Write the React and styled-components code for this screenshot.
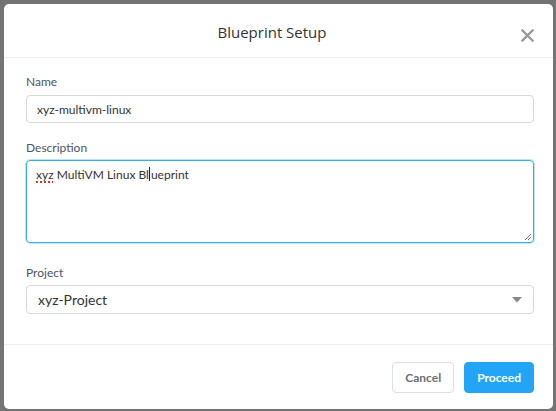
import React from "react";
import styled, { createGlobalStyle } from "styled-components";

const GlobalStyle = createGlobalStyle`
  html, body {
    margin: 0;
    padding: 0;
    background: #747474;
  }
  body {
    font-family: Lato, "Liberation Sans", sans-serif;
  }
`;

const Backdrop = styled.div`
  width: 556px;
  height: 411px;
  box-sizing: border-box;
  padding: 4px 3px 2px 4px;
`;

const Modal = styled.div`
  width: 549px;
  height: 405px;
  background: #fff;
  border-radius: 5px;
  display: flex;
  flex-direction: column;
`;

const Header = styled.div`
  height: 53px;
  border-bottom: 1px solid #eeeeee;
  display: flex;
  align-items: center;
  justify-content: center;
  padding-right: 13px;
  position: relative;
`;

const Title = styled.h2`
  margin: 2px 0 0 0;
  font-family: "Open Sans", Lato, sans-serif;
  font-size: 15px;
  font-weight: 400;
  color: #333;
`;

const Close = styled.button`
  position: absolute;
  right: 18px;
  top: 23px;
  width: 16px;
  height: 16px;
  padding: 0;
  border: none;
  background: none;
  display: flex;
  align-items: center;
  justify-content: center;
`;

const Body = styled.div`
  flex: 1;
  padding: 16px 19px 0 22px;
`;

const Field = styled.div`
  margin-bottom: ${(p) => p.$gap}px;
`;

const Label = styled.div`
  font-size: 12px;
  line-height: 16px;
  color: #4b5563;
  margin-bottom: ${(p) => p.$gap || 5}px;
`;

const Input = styled.div`
  height: 28px;
  box-sizing: border-box;
  border: 1px solid #d6d9dc;
  border-radius: 4px;
  padding: 0 10px;
  display: flex;
  align-items: center;
  font-size: 12px;
  color: #333;
`;

const TextArea = styled.div`
  position: relative;
  height: 83px;
  box-sizing: border-box;
  border: 1px solid #3aaee6;
  box-shadow: 0 0 0 1px #bfe4f7;
  border-radius: 4px;
  padding: 6px 9px;
  font-size: 12px;
  line-height: 16px;
  color: #333;
`;

const Misspelled = styled.span`
  text-decoration: underline dotted #e0302a;
  text-decoration-thickness: 2px;
  text-underline-offset: 2px;
`;

const Caret = styled.span`
  display: inline-block;
  width: 1px;
  height: 14px;
  background: #222;
  vertical-align: -2px;
  margin: 0 0.5px;
`;

const Grip = styled.svg`
  position: absolute;
  right: 1px;
  bottom: 1px;
`;

const Select = styled.div`
  height: 29px;
  margin-top: -1px;
  box-sizing: border-box;
  border: 1px solid #d6d9dc;
  border-radius: 4px;
  padding: 0 11px;
  display: flex;
  align-items: center;
  justify-content: space-between;
  font-size: 14px;
  color: #333;
`;

const Footer = styled.div`
  height: 64px;
  border-top: 1px solid #eeeeee;
  display: flex;
  align-items: center;
  justify-content: flex-end;
  gap: 10px;
  padding: 0 19px 0 0;
`;

const Button = styled.button`
  height: 31px;
  box-sizing: border-box;
  padding: 0 12px;
  border-radius: 4px;
  font-family: inherit;
  font-size: 12px;
  font-weight: 700;
  border: 1px solid ${(p) => (p.$primary ? "#22a5f7" : "#dcdfe3")};
  background: ${(p) => (p.$primary ? "#22a5f7" : "#fff")};
  color: ${(p) => (p.$primary ? "#fff" : "#6b6f73")};
`;

export default function App() {
  return (
    <>
      <GlobalStyle />
      <Backdrop>
        <Modal>
          <Header>
            <Title>Blueprint Setup</Title>
            <Close aria-label="Close">
              <svg width="13" height="13" viewBox="0 0 13 13">
                <path
                  d="M1.5 1.5 L11.5 11.5 M11.5 1.5 L1.5 11.5"
                  stroke="#9a9a9a"
                  strokeWidth="2.4"
                  strokeLinecap="square"
                />
              </svg>
            </Close>
          </Header>
          <Body>
            <Field $gap={17}>
              <Label>Name</Label>
              <Input>xyz-multivm-linux</Input>
            </Field>
            <Field $gap={22}>
              <Label $gap={4}>Description</Label>
              <TextArea>
                <Misspelled>xyz</Misspelled> MultiVM Linux Bl
                <Caret />
                ueprint
                <Grip width="8" height="8" viewBox="0 0 8 8">
                  <path d="M7 1 L1 7 M7 4 L4 7" stroke="#777" strokeWidth="1" />
                </Grip>
              </TextArea>
            </Field>
            <Field $gap={0}>
              <Label>Project</Label>
              <Select>
                <span>xyz-Project</span>
                <svg width="10" height="6" viewBox="0 0 10 6">
                  <path d="M0 0 L10 0 L5 5.5 Z" fill="#888" />
                </svg>
              </Select>
            </Field>
          </Body>
          <Footer>
            <Button>Cancel</Button>
            <Button $primary>Proceed</Button>
          </Footer>
        </Modal>
      </Backdrop>
    </>
  );
}
